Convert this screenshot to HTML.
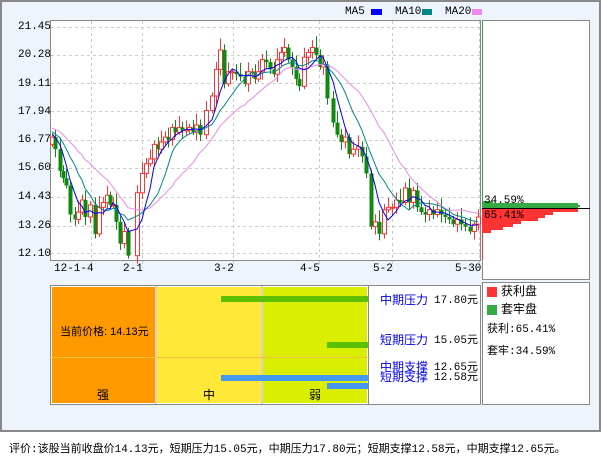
<!DOCTYPE html>
<html><head><meta charset="utf-8"><style>
body{margin:0;background:#fff;width:601px;height:456px;overflow:hidden;font-family:"Liberation Mono","WenQuanYi Zen Hei",monospace;}
.t{position:absolute;font-size:11px;color:#000;white-space:nowrap;line-height:12px}
.b{color:#0000ee}
.cn{font-family:"Liberation Sans","WenQuanYi Zen Hei",sans-serif;font-size:12px}
</style></head><body>
<div style="position:absolute;left:0;top:0;width:597px;height:428px;border:2px solid #888;background:#edf4fc"></div>
<svg id="s" width="601" height="456" style="position:absolute;left:0;top:0" xmlns="http://www.w3.org/2000/svg">
<rect x="50.5" y="20.5" width="430" height="240" fill="#fff" stroke="#888"/>
<rect x="482.5" y="20.5" width="107" height="259" fill="#fff" stroke="#888"/>
<g id="grid" stroke="#ccc" stroke-dasharray="3,3"></g>
<g id="c"></g>
<!-- bottom -->
<rect x="50.5" y="285.5" width="430" height="119" fill="#fff" stroke="#888"/>
<rect x="52" y="287" width="103" height="116" fill="#ff9900"/>
<rect x="157" y="287" width="104" height="116" fill="#ffe838"/>
<rect x="263" y="287" width="104" height="116" fill="#d9ee00"/>
<line x1="156" y1="286" x2="156" y2="404" stroke="#aaa"/>
<line x1="262" y1="286" x2="262" y2="404" stroke="#aaa"/>
<line x1="368.5" y1="286" x2="368.5" y2="404" stroke="#888"/>
<rect x="221" y="296" width="147" height="6" fill="#5cbf00"/>
<rect x="327" y="342" width="41" height="6" fill="#5cbf00"/>
<rect x="221" y="375" width="147" height="6" fill="#4499ee"/>
<rect x="327" y="383" width="41" height="6" fill="#4499ee"/>
<line x1="50" y1="357.5" x2="370" y2="357.5" stroke="#f5c040"/>
<rect x="482.5" y="282.5" width="107" height="122" fill="#fff" stroke="#888"/>
<rect x="487" y="287" width="10" height="10" fill="#ff3333"/>
<rect x="487" y="305" width="10" height="10" fill="#33aa44"/>
<rect x="371" y="9" width="11" height="6" fill="#0000ff"/>
<rect x="422" y="9" width="10" height="6" fill="#008888"/>
<rect x="472" y="9" width="10" height="6" fill="#ee88ee"/>
</svg>
<div class="t" style="left:345px;top:6px">MA5</div>
<div class="t" style="left:395px;top:6px">MA10</div>
<div class="t" style="left:445px;top:6px">MA20</div>
<div class="t" style="left:18px;top:21px">21.45</div>
<div class="t" style="left:18px;top:49px">20.28</div>
<div class="t" style="left:18px;top:78px">19.11</div>
<div class="t" style="left:18px;top:106px">17.94</div>
<div class="t" style="left:18px;top:134px">16.77</div>
<div class="t" style="left:18px;top:162px">15.60</div>
<div class="t" style="left:18px;top:191px">14.43</div>
<div class="t" style="left:18px;top:220px">13.26</div>
<div class="t" style="left:18px;top:248px">12.10</div>
<div class="t" style="left:54px;top:263px">12-1-4</div>
<div class="t" style="left:123px;top:263px">2-1</div>
<div class="t" style="left:214px;top:263px">3-2</div>
<div class="t" style="left:300px;top:263px">4-5</div>
<div class="t" style="left:373px;top:263px">5-2</div>
<div class="t" style="left:455px;top:263px">5-30</div>
<div class="t" style="left:484px;top:195px">34.59%</div>
<div class="t" style="left:484px;top:210px">65.41%</div>
<div class="t cn" style="left:60px;top:326px;font-size:11px">当前价格: 14.13元</div>
<div class="t cn b" style="left:380px;top:294px">中期压力</div><div class="t" style="left:434px;top:295px">17.80元</div>
<div class="t cn b" style="left:380px;top:334px">短期压力</div><div class="t" style="left:434px;top:335px">15.05元</div>
<div class="t cn b" style="left:380px;top:361px">中期支撑</div><div class="t" style="left:434px;top:362px">12.65元</div>
<div class="t cn b" style="left:380px;top:371px">短期支撑</div><div class="t" style="left:434px;top:372px">12.58元</div>
<div class="t cn" style="left:97px;top:389px">强</div>
<div class="t cn" style="left:203px;top:389px">中</div>
<div class="t cn" style="left:309px;top:389px">弱</div>
<div class="t cn" style="left:501px;top:285px">获利盘</div>
<div class="t cn" style="left:501px;top:303px">套牢盘</div>
<div class="t" style="left:487px;top:324px">获利:65.41%</div>
<div class="t" style="left:487px;top:346px">套牢:34.59%</div>
<div class="t" style="left:9px;top:444px">评价:该股当前收盘价14.13元，短期压力15.05元，中期压力17.80元；短期支撑12.58元，中期支撑12.65元。</div>
<script>
var NS="http://www.w3.org/2000/svg",c=document.getElementById('c'),g=document.getElementById('grid');
function Y(p){return 27+(21.45-p)*24.2;}
function el(t,a,par){var e=document.createElementNS(NS,t);for(var k in a)e.setAttribute(k,a[k]);(par||c).appendChild(e);return e;}
[27,55,83,111,140,168,197,226,253].forEach(function(y){el('line',{x1:51,x2:480,y1:y+.5,y2:y+.5},g);});
[91,142,233,319,392,479].forEach(function(x){el('line',{x1:x+.5,x2:x+.5,y1:21,y2:268},g);});
var d=[[52,16.9],[55,16.4],[60,15.5],[63,15.2],[66,14.9],[70,13.7],[75,13.5],[78,13.8],[82,14.3],[85,13.6],[90,14.1],[95,12.9],[99,14.0],[103,14.2],[107,14.5],[110,14.1],[113,14.1],[116,13.4],[120,12.5],[124,13.0],[128,12.0],[137,14.6],[142,15.4],[146,15.8],[150,16.0],[154,16.6],[158,16.4],[161,16.7],[165,16.9],[168,16.8],[172,17.3],[175,17.1],[179,17.3],[182,17.2],[186,17.2],[189,17.3],[193,17.1],[196,17.4],[200,17.0],[206,18.0],[212,18.6],[216,19.7],[220,20.5],[224,19.1],[228,19.6],[232,19.6],[236,19.5],[240,19.4],[245,19.1],[248,19.6],[252,19.6],[255,19.3],[258,19.6],[262,20.1],[266,20.0],[270,19.7],[274,19.5],[277,20.1],[281,20.4],[284,20.6],[288,20.1],[292,19.8],[296,19.3],[299,19.0],[304,20.2],[308,20.4],[312,20.6],[316,20.3],[320,19.8],[323,19.9],[327,18.5],[333,17.5],[337,17.0],[341,16.7],[345,16.9],[349,16.2],[353,16.4],[358,16.5],[362,16.1],[366,15.4],[371,13.2],[375,13.4],[379,12.9],[384,13.9],[388,14.0],[392,14.0],[396,14.3],[400,14.2],[405,14.8],[409,14.2],[413,14.7],[417,14.0],[421,13.8],[425,13.7],[429,13.9],[433,13.7],[437,13.9],[441,13.7],[445,13.6],[449,13.5],[453,13.3],[457,13.5],[461,13.3],[465,13.2],[470,13.0],[474,13.3],[478,13.6]];
var cl=[];for(var i=0;i<20;i++)cl.push(17.6-i*0.03);
var prev=16.6;
d.forEach(function(q,i){var o=prev,cc=q[1];if(i==0)o=16.6;var up=cc>=o;var hi=Math.max(o,cc)+0.15+((i*37)%5)*0.08,lo=Math.min(o,cc)-0.12-((i*23)%4)*0.07;
var col=up?'#ff3333':'#118811';el('line',{x1:q[0]+.5,x2:q[0]+.5,y1:Y(hi),y2:Y(lo),stroke:col});
var y1=Y(Math.max(o,cc)),h=Math.max(1,Y(Math.min(o,cc))-y1);
if(up)el('rect',{x:q[0]-1.5,y:y1,width:4,height:h,fill:'#fff',stroke:col});else el('rect',{x:q[0]-1.5,y:y1,width:4,height:h,fill:col});
cl.push(cc);prev=cc;});
function ma(n,col){var pts=[];d.forEach(function(q,i){var k=i+20,s=0;for(var j=0;j<n;j++)s+=cl[k-j];pts.push(q[0]+','+Y(s/n).toFixed(1));});el('polyline',{points:pts.join(' '),fill:'none',stroke:col});}
ma(20,'#ee88ee');ma(10,'#008888');ma(5,'#0000ff');
var s=document.getElementById('s');
el('line',{x1:482.5,x2:482.5,y1:21,y2:207,stroke:'#33aa44'},s);
el('line',{x1:482.5,x2:482.5,y1:209,y2:260,stroke:'#ff3333'},s);
[[201,8,10],[203,3,25],[205,4,97]].forEach(function(r){el('rect',{x:483,y:r[0],width:r[2],height:r[1]>3?r[1]-2:r[1],fill:'#33aa44'},s);});
el('rect',{x:483,y:203,width:95,height:5,fill:'#33aa44'},s);
[[209,95],[212,70],[215,62],[218,55],[221,38],[224,30],[227,20],[230,8]].forEach(function(r){el('rect',{x:483,y:r[0],width:r[1],height:3,fill:'#ff3333'},s);});
el('rect',{x:483,y:210,width:4,height:23,fill:'#ff3333'},s);
el('line',{x1:482,x2:590,y1:208.5,y2:208.5,stroke:'#000'},s);
</script>
</body></html>
